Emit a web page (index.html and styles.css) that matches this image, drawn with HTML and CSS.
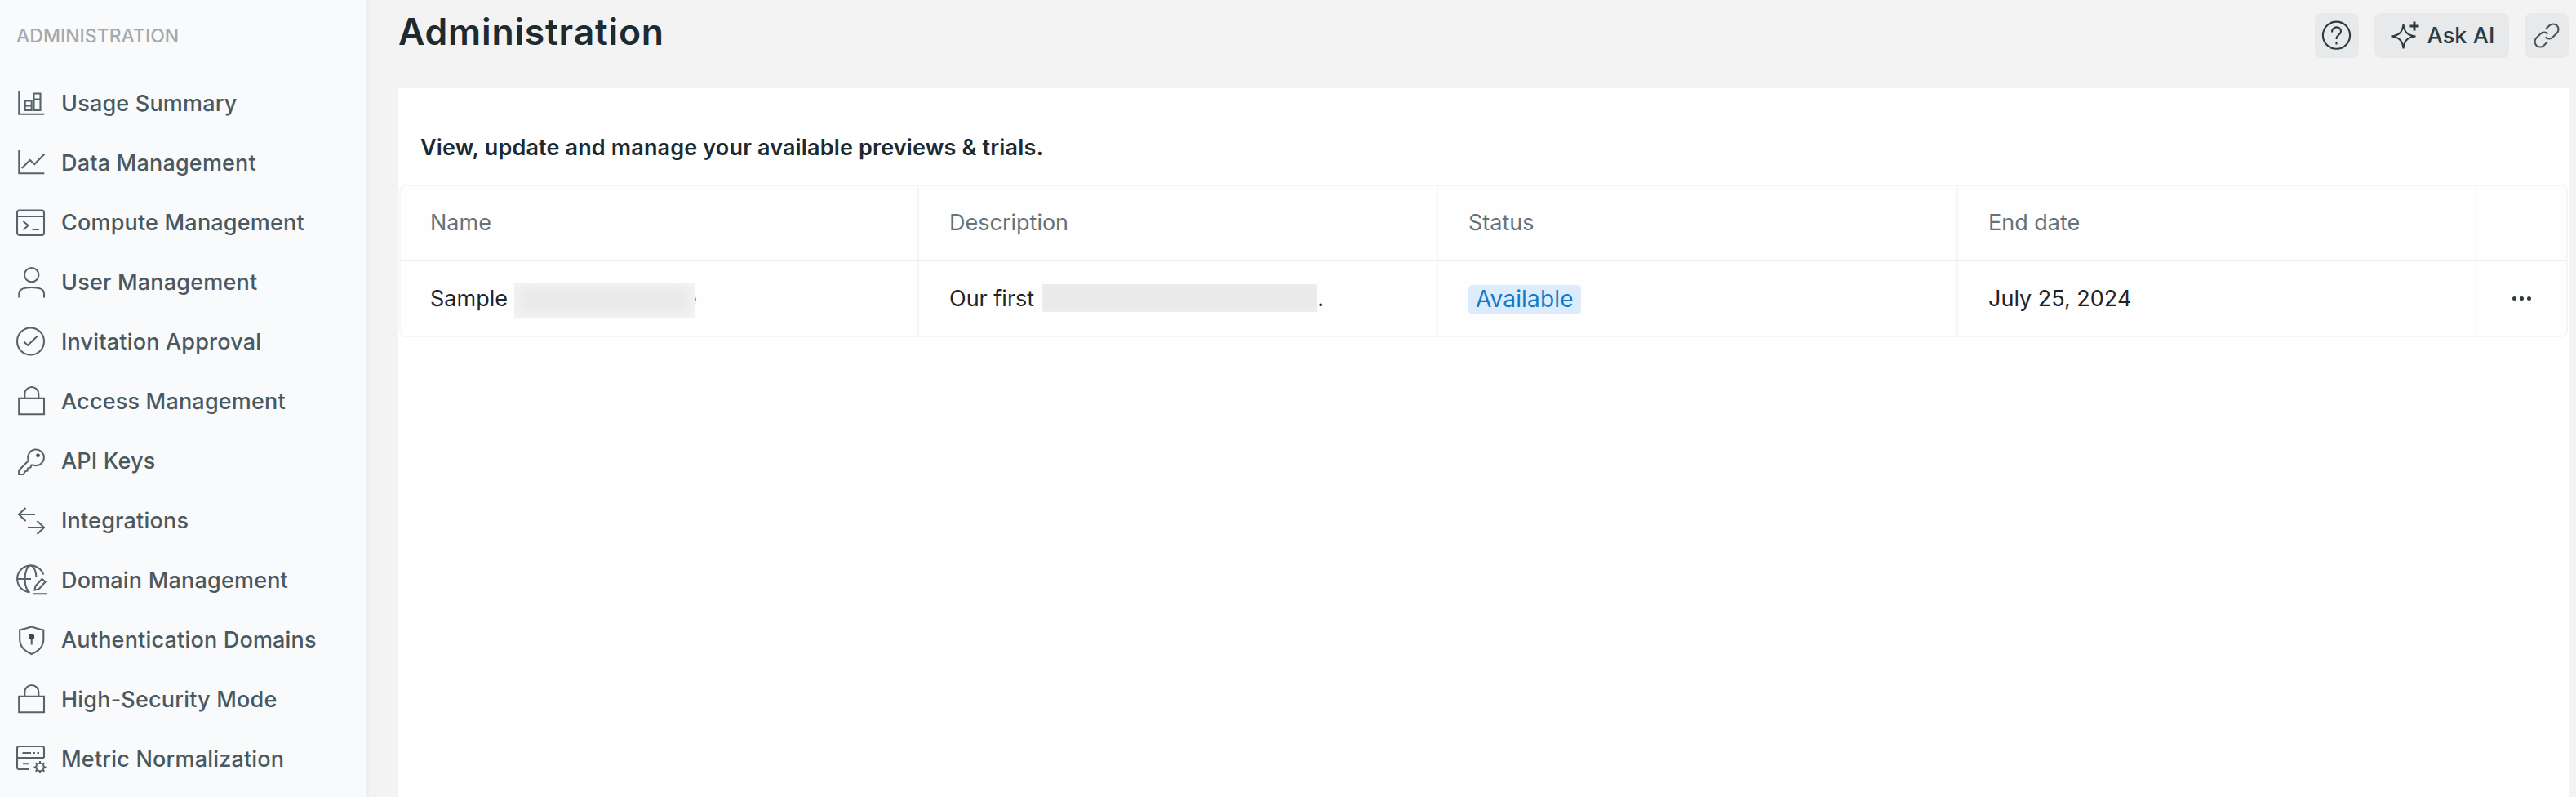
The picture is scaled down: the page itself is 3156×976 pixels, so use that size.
FILE: index.html
```html
<!DOCTYPE html>
<html lang="en">
<head>
<meta charset="utf-8">
<title>Administration</title>
<link rel="stylesheet" href="styles.css">
</head>
<body>
<div class="app">
  <nav class="sidebar">
    <h2 class="sidebar-title">ADMINISTRATION</h2>
    <ul class="menu">
      <li class="item"><svg class="icon" viewBox="0 0 40 40"><path d="M5.3 4V32.8H36.3M12.7 28V16.5h8V28zM12.7 22.500h8M23.500 28V7.500h8V28zM23.500 14.500h8"/></svg><span>Usage Summary</span></li>
      <li class="item"><svg class="icon" viewBox="0 0 40 40"><path d="M5.300 4V32.300H36.300M8.700 26L18.700 16L24.300 21L36.500 8.500"/></svg><span>Data Management</span></li>
      <li class="item"><svg class="icon" viewBox="0 0 40 40"><rect x="3" y="4.500" width="33" height="30.500" rx="3"/><path d="M3 12H36M10.500 18L16.500 23L10.500 28.500M21.500 28H30"/></svg><span>Compute Management</span></li>
      <li class="item"><svg class="icon" viewBox="0 0 40 40"><circle cx="20.700" cy="10.700" r="8.700"/><path d="M5.300 38.500V33.500C5.300 28 12 26 20.700 26S36 28 36 33.500V38.500"/></svg><span>User Management</span></li>
      <li class="item"><svg class="icon" viewBox="0 0 40 40"><circle cx="19.500" cy="19" r="16.500"/><path d="M11.300 19.500L16 23.800L27.700 12.700"/></svg><span>Invitation Approval</span></li>
      <li class="item"><svg class="icon" viewBox="0 0 40 40"><path d="M5.200 15.900H36V35.200H5.200zM12.300 15.900V10.500a8.500 8.500 0 0 1 17 0V15.900"/></svg><span>Access Management</span></li>
      <li class="item"><svg class="icon" viewBox="0 0 40 40"><path d="M17 19A9.800 9.800 0 1 1 22.800 24.500L20.500 24.500L19.500 27.500L16 28.500L15.500 31.500L12.500 32.500L11 36H5.200V31z"/><circle class="solid" cx="28.500" cy="12.800" r="2.300"/></svg><span>API Keys</span></li>
      <li class="item"><svg class="icon" viewBox="0 0 40 40"><path d="M13.500 4L5 12L13.500 20M5 12H25M27.500 20L36 28L27.500 36M36 28H16"/></svg><span>Integrations</span></li>
      <li class="item"><svg class="icon" viewBox="0 0 40 40"><path d="M35.200 12.500A16.500 16.500 0 1 0 18.500 34.400M3 18H20M19.500 1.500C15 2.500 12.500 10 12.500 18S15 33 18.500 34.400M19.500 1.500C23.500 2.500 26 8 26.500 16M24.500 31.500L25.500 26.500L33.500 18L37.500 21.500L29.500 30.500zM22.500 36.200H39"/></svg><span>Domain Management</span></li>
      <li class="item"><svg class="icon" viewBox="0 0 40 40"><path d="M20.700 3.500C25.500 5 30 6.500 35.300 7.500V19C35.300 28 29 33.500 20.700 37C12.500 33.500 6.200 28 6.200 19V7.500C11.500 6.500 16 5 20.700 3.500zM20.700 15V25.500"/><circle class="solid" cx="20.700" cy="15.800" r="3.500"/></svg><span>Authentication Domains</span></li>
      <li class="item"><svg class="icon" viewBox="0 0 40 40"><path d="M5.200 15.900H36V35.200H5.200zM12.300 15.900V10.500a8.500 8.500 0 0 1 17 0V15.900"/></svg><span>High-Security Mode</span></li>
      <li class="item"><svg class="icon" viewBox="0 0 40 40"><path d="M36 18V6.500Q36 4 33.500 4H5.500Q3 4 3 6.500V29.500Q3 32 5.500 32H18M3 18H36M9.500 12H20M22.500 12h2.500M27.500 12h2.500M10 25.300H18"/><circle cx="31" cy="29.500" r="4.700"/><path d="M31 24.800V22M31 34.200V37M26.300 29.500H23.500M35.700 29.500H38.500M27.700 26.200L25.700 24.200M34.300 26.200L36.300 24.200M27.700 32.800L25.700 34.800M34.300 32.800L36.300 34.800"/></svg><span>Metric Normalization</span></li>
    </ul>
  </nav>
  <main class="main">
    <header class="topbar">
      <h1 class="title">Administration</h1>
      <div class="actions">
        <button class="btn square" aria-label="Help"><svg class="icon dark" viewBox="0 0 40 40"><circle cx="19.500" cy="19.200" r="16.600"/><path d="M14 15.500C14 7.500 25 7.500 25 14.500C25 18.500 19.500 18.500 19.500 24"/><path d="M19.500 27.500v3"/></svg></button>
        <button class="btn ask"><svg class="icon dark" viewBox="0 0 40 40"><path d="M19.500 6C20.500 15 24.500 19.500 34.500 20.500C24.500 21.500 20.500 26 19.500 35.500C18.500 26 14.500 21.500 4.500 20.500C14.500 19.500 18.500 15 19.500 6z"/><path class="thick" d="M33 2.500V13.500M27.500 8H38.500"/></svg><span>Ask AI</span></button>
        <button class="btn square" aria-label="Copy link"><svg class="icon link" viewBox="0 0 40 40"><g transform="rotate(-45 20 19.500)"><path d="M15 25.700H9A6.500 6.500 0 0 1 9 12.700H16A6.500 6.500 0 0 1 22.500 19.200M25 13.300H31A6.500 6.500 0 0 1 31 26.300H24A6.500 6.500 0 0 1 17.500 19.800"/></g></svg></button>
      </div>
    </header>
    <section class="card">
      <p class="lead">View, update and manage your available previews &amp; trials.</p>
      <div class="table">
        <div class="row head">
          <div class="cell">Name</div><div class="cell">Description</div><div class="cell">Status</div><div class="cell">End date</div><div class="cell"></div>
        </div>
        <div class="row">
          <div class="cell"><span>Sample</span><span class="redacted name-mask"></span><span class="tail">e</span></div>
          <div class="cell"><span>Our first</span><span class="redacted text-mask"></span><span>.</span></div>
          <div class="cell"><span class="badge">Available</span></div>
          <div class="cell">July 25, 2024</div>
          <div class="cell more"><i></i><i></i><i></i></div>
        </div>
      </div>
    </section>
  </main>
</div>
</body>
</html>
```
FILE: styles.css
```css
* { box-sizing: border-box; }
body { margin: 0; font-family: Inter, "Liberation Sans", sans-serif; font-size: 27px; color: #1d252c; background: #f3f3f3; }
h1, h2, p, ul { margin: 0; padding: 0; }
.app { display: flex; width: 3156px; height: 976px; overflow: hidden; }

.sidebar { flex: none; width: 452px; padding: 30px 0 0 18px; background: #f9fafc; border-right: 4px solid #edeef0; }
.sidebar-title { height: 60px; padding-left: 2px; font-size: 23px; line-height: 28px; font-weight: 550; color: #a3aaad; }
.menu { list-style: none; }
.item { display: flex; align-items: center; gap: 17px; height: 73px; font-weight: 500; letter-spacing: 0.19px; color: #4a585f; }
.icon { flex: none; width: 40px; height: 40px; overflow: visible; fill: none; stroke: #56636a; stroke-width: 2.1; }
.icon .solid { fill: #3a484f; stroke: none; }
.icon.dark { stroke: #2c3a41; }
.icon.link { stroke: #46545b; }
.icon .thick { stroke-width: 3; }

.main { flex: 1; display: flex; flex-direction: column; padding: 0 9px 0 36px; }
.topbar { flex: none; display: flex; justify-content: space-between; height: 108px; padding-top: 16px; }
.title { font-size: 44.5px; line-height: 46px; font-weight: 580; letter-spacing: 0.8px; color: #1d2a30; }
.actions { display: flex; gap: 19px; }
.btn { display: flex; align-items: center; justify-content: center; height: 55px; padding: 0; border: 0; border-radius: 8px; background: #e7e9ea; font: 500 27px Inter, sans-serif; color: #2c3a41; }
.square { width: 54px; padding-right: 1px; }
.ask { width: 165px; gap: 9px; padding-right: 2px; letter-spacing: 0.1px; }

.card { flex: 1; background: #fff; }
.lead { height: 118px; padding: 56px 0 0 27px; line-height: 34px; font-weight: 600; font-size: 27px; letter-spacing: 0.15px; color: #1d2a30; }
.table { margin: 0 1px; border: 2px solid #f5f6f6; border-radius: 8px; background: #fefefe; }
.row { display: grid; grid-template-columns: 635px 636px 637px 636px 1fr; height: 91px; }
.head { color: #64727a; height: 92px; border-bottom: 2px solid #eeefef; }
.cell { display: flex; align-items: center; padding: 0 0 1px 37px; border-right: 2px solid #f5f6f6; }
.cell:first-child { padding-left: 36px; }
.cell:last-child { border-right: 0; }
.redacted { flex: none; background: #e9e9e9; box-shadow: inset 0 0 16px 6px #f4f4f4; }
.name-mask { width: 221px; height: 44px; margin: 5px -13px 0 8px; z-index: 1; }
.text-mask { width: 338px; height: 34px; margin: 0 0 0 9px; box-shadow: inset 0 0 10px 1px #efefef; }
.badge { height: 36px; padding: 0 9px; border-radius: 5px; background: #ddecfd; color: #1478c8; font-size: 28px; letter-spacing: 0.15px; line-height: 35px; margin-top: 3px; }
.cell.more { justify-content: center; gap: 4px; padding: 0; }
.more i { width: 5px; height: 5px; border-radius: 50%; background: #2c3a41; }
```
